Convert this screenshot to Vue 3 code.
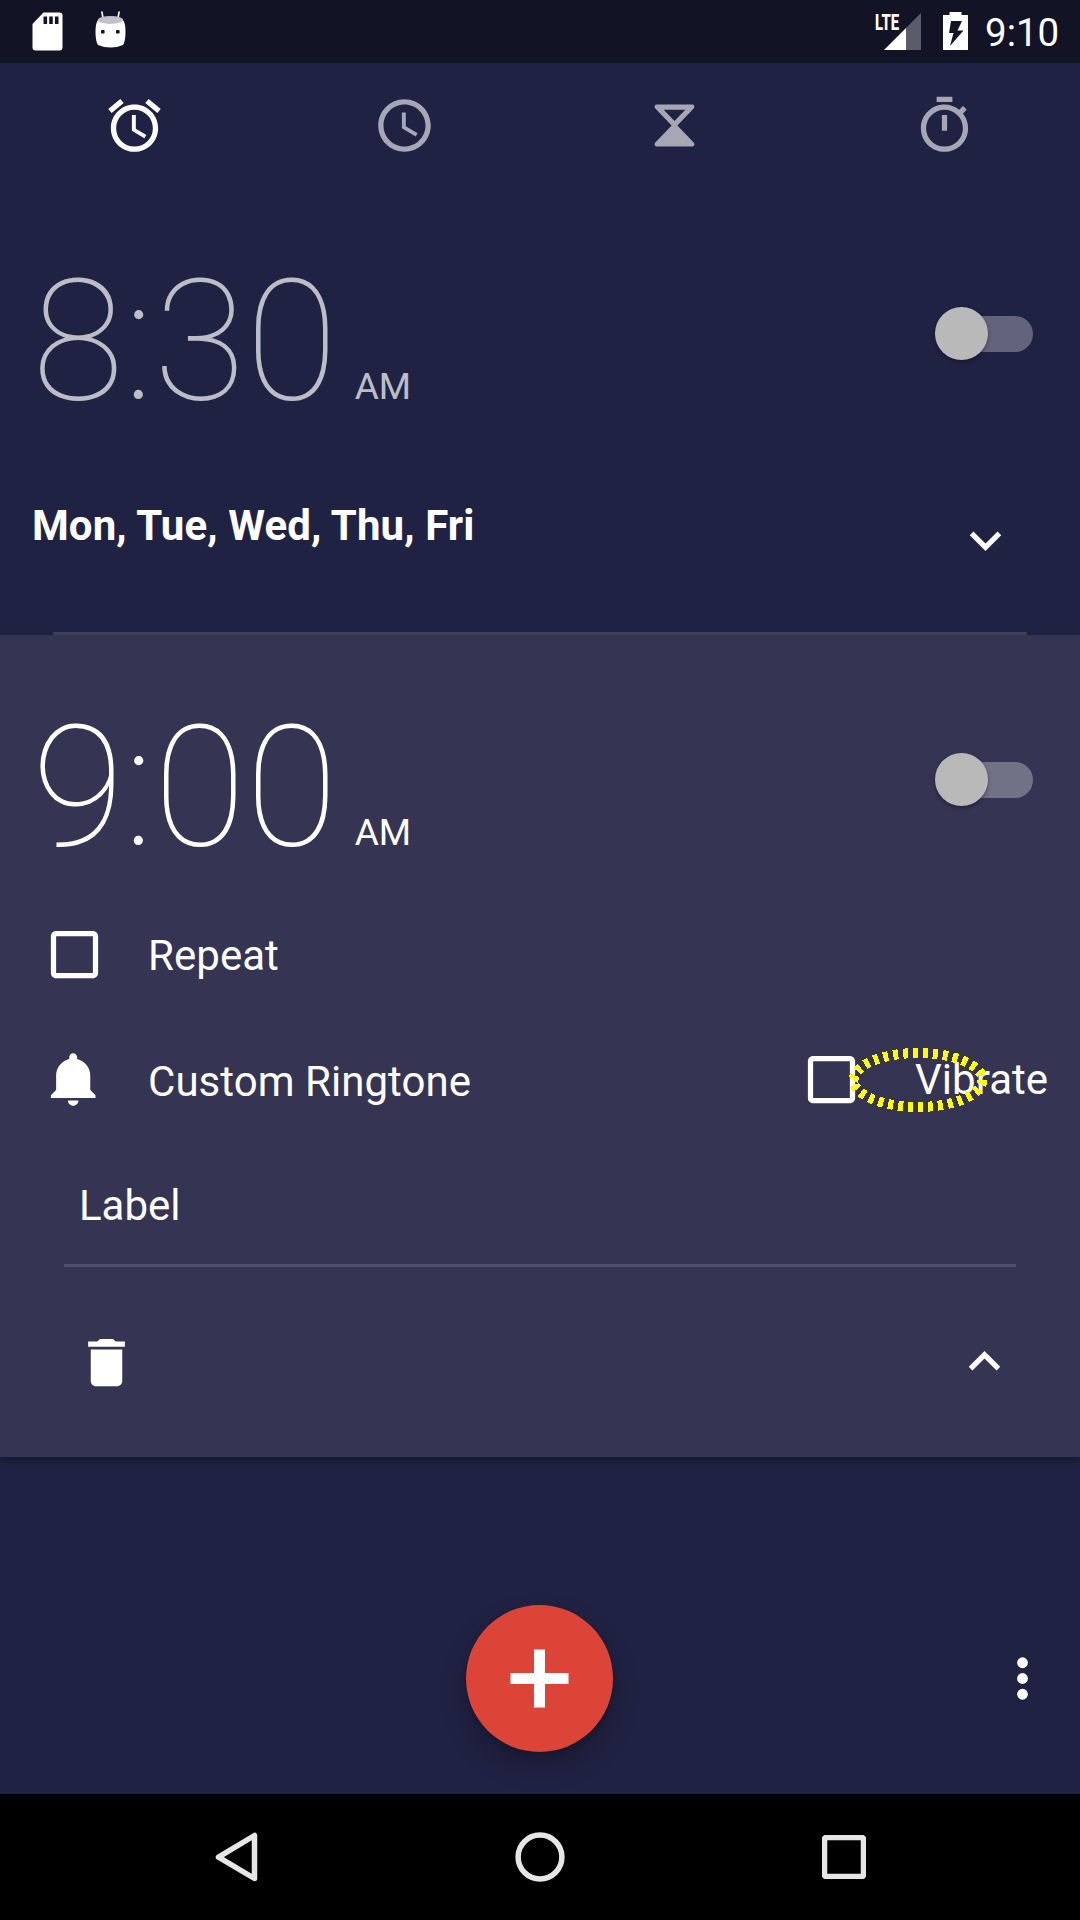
<script setup>
import { ref } from 'vue'

const tabs = [
  {
    id: 'alarm',
    active: true,
    d: 'M22 5.72l-4.6-3.86-1.29 1.53 4.6 3.86L22 5.72zM7.88 3.39L6.6 1.86 2 5.71l1.29 1.53 4.59-3.85zM12.5 8H11v6l4.75 2.85.75-1.23-4-2.37V8zM12 4c-4.97 0-9 4.03-9 9s4.02 9 9 9c4.97 0 9-4.03 9-9s-4.03-9-9-9zm0 16c-3.87 0-7-3.13-7-7s3.13-7 7-7 7 3.13 7 7-3.13 7-7 7z'
  },
  {
    id: 'clock',
    d: 'M11.99 2C6.47 2 2 6.48 2 12s4.47 10 9.99 10C17.52 22 22 17.52 22 12S17.52 2 11.99 2zM12 20c-4.42 0-8-3.58-8-8s3.58-8 8-8 8 3.58 8 8-3.58 8-8 8zm.5-13H11v6l5.25 3.15.75-1.23-4.5-2.67z'
  },
  {
    id: 'timer',
    d: 'M5.2 4h13.6c.75 0 1.05.95.5 1.5L13.1 12l6.2 6.5c.55.55.25 1.5-.5 1.5H5.2c-.75 0-1.05-.95-.5-1.5L10.9 12 4.7 5.5C4.15 4.95 4.45 4 5.2 4zM7.9 6l4.1 4.3L16.1 6z'
  },
  {
    id: 'stopwatch',
    d: 'M15 1H9v2h6V1zm-4 13h2V8h-2v6zm8.03-6.61l1.42-1.42c-.43-.51-.9-.99-1.41-1.41l-1.42 1.42C16.07 4.74 14.12 4 12 4c-4.97 0-9 4.03-9 9s4.02 9 9 9 9-4.03 9-9c0-2.12-.74-4.07-1.97-5.61zM12 20c-3.87 0-7-3.13-7-7s3.13-7 7-7 7 3.13 7 7-3.13 7-7 7z'
  }
]

const checkbox =
  'M19 5v14H5V5h14m0-2H5c-1.1 0-2 .9-2 2v14c0 1.1.9 2 2 2h14c1.1 0 2-.9 2-2V5c0-1.1-.9-2-2-2z'

const clock = ref('9:10')
</script>

<template>
  <div class="screen">
    <header class="status">
      <svg class="sd" width="31" height="39" viewBox="0 0 31 39">
        <path fill="#fff" fill-rule="evenodd" d="M11.5.5H27.500a3 3 0 0 1 3 3v32a3 3 0 0 1-3 3h-24a3 3 0 0 1-3-3V12zM11.500 4.500v7.500h3.600V4.500zM17.200 4.500v7.500h3.600V4.500zM22.900 4.500v7.500h3.600V4.500z" />
      </svg>
      <svg class="bot" width="31" height="37" viewBox="0 0 31 37">
        <path d="M6.900 1l1.300 7M24.100 1l-1.300 7" stroke="#fff" stroke-width="1.600" stroke-linecap="round" />
        <path fill="#fff" d="M3 9Q15.500 15 28 9Q30.500 12 30.500 21Q30.500 30 28 34Q22 36.500 15.500 36.500Q9 36.500 3 34Q.5 30 .5 21Q.5 12 3 9z" />
        <ellipse cx="15.500" cy="9" rx="12.700" ry="3.900" fill="#c1c1c9" />
        <rect x="6" y="19" width="3.600" height="3.600" rx=".8" fill="#131326" />
        <rect x="21" y="19" width="3.600" height="3.600" rx=".8" fill="#131326" />
      </svg>
      <div class="signal">
        <svg width="37" height="37" viewBox="0 0 37 37">
          <path fill="#5b5c69" d="M37 0V37H22V15z" />
          <path fill="#fff" d="M22 15V37H0z" />
        </svg>
        <span class="lte">LTE</span>
      </div>
      <svg class="battery" width="25" height="38" viewBox="0 0 25 38">
        <path fill="#fff" fill-rule="evenodd" d="M6.500 0H18.500V3H25V38H0V3H6.500zM8 9L6 21H10.500L7 34L20.500 18.500H14.500L19 9z" />
      </svg>
      <span class="clock">{{ clock }}</span>
    </header>

    <nav class="tabs">
      <div v-for="t in tabs" :key="t.id" class="tab" :class="{ active: t.active }">
        <svg class="icon" viewBox="0 0 24 24"><path fill-rule="evenodd" :d="t.d" /></svg>
      </div>
    </nav>

    <section class="card first">
      <div class="time-row dim">
        <div class="time"><span class="digits">8:30</span><span class="ampm">AM</span></div>
        <div class="switch"><i class="thumb"></i></div>
      </div>
      <div class="days-row">
        <span class="days">Mon, Tue, Wed, Thu, Fri</span>
        <svg class="icon" viewBox="0 0 24 24"><path d="M16.590 8.590L12 13.170 7.410 8.590 6 10l6 6 6-6z" /></svg>
      </div>
      <div class="divider"></div>
    </section>

    <section class="card second">
      <div class="time-row">
        <div class="time"><span class="digits">9:00</span><span class="ampm">AM</span></div>
        <div class="switch"><i class="thumb"></i></div>
      </div>
      <div class="option repeat">
        <svg class="icon" viewBox="0 0 24 24"><path :d="checkbox" /></svg>
        <span class="text">Repeat</span>
      </div>
      <div class="option ringtone">
        <svg class="icon" viewBox="0 0 24 24"><path d="M11.500 22c1.100 0 2-.9 2-2h-4c0 1.100.9 2 2 2zm6.500-6v-5.500c0-3.070-2.130-5.640-5-6.320V3.500c0-.83-.67-1.500-1.500-1.500S10 2.670 10 3.500v.68c-2.870.68-5 3.250-5 6.320V16l-2 2v1h17v-1l-2-2z" /></svg>
        <span class="text">Custom Ringtone</span>
        <div class="vibrate">
          <svg class="icon" viewBox="0 0 24 24"><path :d="checkbox" /></svg>
          <span class="text">Vibrate</span>
          <svg class="marker" width="140" height="66" viewBox="0 0 140 66">
            <ellipse cx="70" cy="33" rx="64.500" ry="27" pathLength="300" />
          </svg>
        </div>
      </div>
      <div class="label">Label</div>
      <div class="actions">
        <svg class="icon trash" viewBox="0 0 24 24"><path d="M6 19c0 1.100.9 2 2 2h8c1.100 0 2-.9 2-2V7H6v12zM19 4h-3.500l-1-1h-5l-1 1H5v2h14V4z" /></svg>
        <svg class="icon" viewBox="0 0 24 24"><path d="M12 8l-6 6 1.410 1.410L12 10.830l4.590 4.580L18 14z" /></svg>
      </div>
    </section>

    <footer class="bottom">
      <span></span>
      <button class="fab">
        <svg width="59" height="59" viewBox="0 0 59 59"><path fill="#fff" d="M24 .5h11v23.500h23.500v11H35v23.500H24V35H.5V24H24z" /></svg>
      </button>
      <svg class="icon more" viewBox="0 0 24 24">
        <circle cx="12" cy="6" r="2.050" /><circle cx="12" cy="12" r="2.050" /><circle cx="12" cy="18" r="2.050" />
      </svg>
    </footer>

    <nav class="system">
      <svg width="43" height="50" viewBox="0 0 43 50"><path d="M39.500 3.500V46.500L3.500 25.200z" /></svg>
      <svg width="50" height="50" viewBox="0 0 50 50"><circle cx="25" cy="25" r="21.900" /></svg>
      <svg width="44" height="44" viewBox="0 0 44 44"><rect x="2.500" y="2.500" width="39" height="39" rx="1.500" /></svg>
    </nav>
  </div>
</template>

<style>
body {
  margin: 0;
  background: #202243;
}
</style>

<style scoped>
.screen {
  width: 1080px;
  height: 1920px;
  display: flex;
  flex-direction: column;
  overflow: hidden;
  background: #202243;
  color: #fff;
  font-family: Roboto, "Noto Sans", sans-serif;
}
.screen svg {
  display: block;
  flex: none;
}
.icon {
  width: 63px;
  height: 63px;
  fill: #fff;
}
.status {
  height: 63px;
  box-sizing: border-box;
  flex: none;
  display: flex;
  align-items: flex-start;
  padding: 0 21px 0 32px;
  background: #131326;
}
.sd {
  margin-top: 12px;
}
.bot {
  margin: 11px 0 0 32px;
}
.signal {
  position: relative;
  margin: 13px 0 0 auto;
}
.lte {
  position: absolute;
  left: -9.5px;
  top: -2px;
  font-size: 22.5px;
  line-height: 22px;
  font-weight: 800;
  transform: scaleX(0.66);
  transform-origin: 0 0;
}
.battery {
  margin: 12px 0 0 22px;
}
.clock {
  width: 74px;
  margin: 11px 0 0 17px;
  font-size: 38.5px;
  line-height: 44px;
  white-space: nowrap;
}
.tabs {
  height: 125px;
  flex: none;
  display: grid;
  grid-template-columns: repeat(4, 1fr);
}
.tab {
  display: flex;
  align-items: center;
  justify-content: center;
  padding-right: 1px;
  opacity: 0.6;
}
.tab.active {
  opacity: 1;
}
.card {
  flex: none;
  box-sizing: border-box;
  display: flex;
  flex-direction: column;
}
.first {
  height: 447px;
  padding-top: 55px;
}
.second {
  height: 822px;
  padding-top: 54px;
  background: #353553;
  box-shadow: 0 5px 8px rgba(0, 0, 0, 0.25);
}
.time-row {
  height: 197px;
  display: flex;
  align-items: flex-start;
  justify-content: space-between;
  padding: 0 47px 0 32px;
}
.time {
  display: flex;
  align-items: baseline;
}
.dim .time {
  opacity: 0.7;
}
.digits {
  font-size: 168px;
  line-height: 197px;
  font-weight: 100;
}
.ampm {
  margin-left: 17px;
  font-size: 37px;
}
.switch {
  width: 89px;
  height: 36px;
  margin-top: 73px;
  border-radius: 18px;
  background: rgba(255, 255, 255, 0.3);
  display: flex;
  align-items: center;
}
.thumb {
  width: 53px;
  height: 53px;
  margin: -1px 0 0 -9px;
  border-radius: 50%;
  background: #b9b9b9;
  box-shadow: 0 2px 4px rgba(0, 0, 0, 0.35);
}
.days-row {
  display: flex;
  justify-content: space-between;
  align-items: flex-start;
  margin-top: 61px;
  padding: 0 63px 0 32px;
}
.days-row .icon {
  margin-top: 8px;
}
.days {
  font-size: 42px;
  line-height: 50px;
  font-weight: 700;
  letter-spacing: 0.1px;
}
.divider {
  height: 3px;
  margin: auto 53px 0;
  background: #404158;
}
.option {
  display: flex;
  align-items: flex-start;
  height: 63px;
  padding-left: 43px;
}
.text {
  font-size: 42px;
  line-height: 50px;
  letter-spacing: 0.05px;
  white-space: nowrap;
}
.option > .text {
  margin: 9px 0 0 42px;
}
.repeat {
  margin-top: 36.5px;
}
.repeat > .text {
  margin-top: 8.5px;
}
.ringtone {
  margin-top: 62.5px;
}
.vibrate {
  position: relative;
  display: flex;
  align-items: flex-start;
  width: 280.5px;
  margin-left: auto;
}
.vibrate .text {
  margin: 7px 0 0 52.5px;
}
.marker {
  position: absolute;
  left: 48px;
  top: -1px;
}
.marker ellipse {
  fill: none;
  stroke: #ffff00;
  stroke-width: 10px;
  stroke-dasharray: 5 5;
  shape-rendering: crispEdges;
}
.label {
  height: 83px;
  margin: 70px 64px 0;
  padding-left: 15px;
  border-bottom: 3px solid #52526c;
  font-size: 42px;
  line-height: 50px;
}
.actions {
  display: flex;
  justify-content: space-between;
  margin-top: 63px;
  padding: 0 64px 0 75px;
}
.trash {
  margin-top: 1px;
}
.bottom {
  flex: 1;
  display: grid;
  grid-template-columns: 466px 147px 1fr;
  align-items: start;
}
.fab {
  width: 147px;
  height: 147px;
  margin: 148px 0 0;
  padding: 0;
  border: 0;
  border-radius: 50%;
  background: #db4437;
  display: flex;
  align-items: center;
  justify-content: center;
  box-shadow: 0 14px 26px rgba(0, 0, 0, 0.25), 0 2px 6px rgba(0, 0, 0, 0.15);
}
.more {
  margin: 190px 26px 0 auto;
}
.system {
  height: 126px;
  box-sizing: border-box;
  flex: none;
  display: flex;
  align-items: center;
  justify-content: space-between;
  padding: 0 214px 0 214.5px;
  background: #000;
}
.system svg {
  fill: none;
  stroke: #e6e6e6;
  stroke-width: 5.5px;
  stroke-linejoin: round;
}
</style>
